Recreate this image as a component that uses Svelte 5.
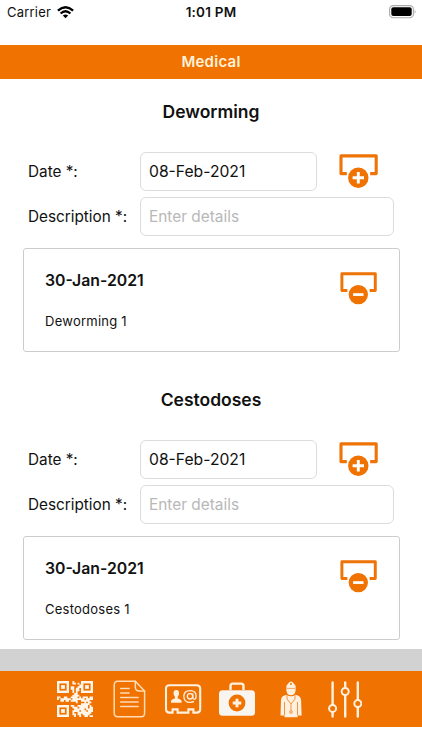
<script lang="ts">
	let sections = $state([
		{ title: 'Deworming', date: '08-Feb-2021', details: '', entry: { date: '30-Jan-2021', text: 'Deworming 1' } },
		{ title: 'Cestodoses', date: '08-Feb-2021', details: '', entry: { date: '30-Jan-2021', text: 'Cestodoses 1' } }
	]);

	// corner squares are drawn separately
	const qrRows = [
		'.........#...........',
		'.........##.#........',
		'.............#.......',
		'........##..##.......',
		'........##.##........',
		'.........#.##........',
		'.........#.#.........',
		'..........##.........',
		'.........####........',
		'##..##..####.#.###.##',
		'#.######.#######.####',
		'..##.##.####..#####..',
		'...........#....#.##.',
		'..............#####..',
		'........##..######.#.',
		'.........###.#####.##',
		'..........######.####',
		'.........####.###.###',
		'.........#..########.',
		'.........##.##.####..',
		'..........#..#..##.##'
	];

	const qrPath = qrRows
		.flatMap((row, y) => [...row].map((cell, x) => (cell === '#' ? `M${x} ${y}h1.05v1.05h-1.05z` : '')))
		.join('');

	const qrCorners = [
		[0, 0],
		[14, 0],
		[0, 14]
	];
</script>

{#snippet action(kind: string)}
	<svg class="action-icon" viewBox="0 0 39 35" aria-hidden="true">
		<path d="M7.8 19.6H2V1.9h35.2v17.7h-6" fill="none" stroke="#ee7408" stroke-width="3.1" stroke-linejoin="round" />
		<circle cx="19.3" cy="23.8" r="10.2" fill="#f07200" />
		<path d={kind === 'add' ? 'M13.6 23.8h11.4M19.3 18.1v11.4' : 'M13.8 23.8h11'} stroke="#fff" stroke-width="2.9" />
	</svg>
{/snippet}

<div class="screen">
	<div class="status">
		<div class="carrier">
			Carrier
			<svg width="17" height="13" viewBox="0 0 17 13" aria-hidden="true">
				<g fill="none" stroke="#000" stroke-width="2.3">
					<path d="M.9 4.6Q8.5-2.2 16.1 4.6" />
					<path d="M3.6 7.5Q8.5 3.1 13.4 7.5" />
				</g>
				<path d="M5.8 9.5Q8.5 7.3 11.2 9.5L8.5 12.3z" />
			</svg>
		</div>
		<div class="time">1:01 PM</div>
		<svg class="battery" width="27" height="14" viewBox="0 0 27 14" aria-hidden="true">
			<rect x=".6" y=".6" width="23.8" height="12.2" rx="3.7" fill="#fff" stroke="#aaa" stroke-width="1.1" />
			<rect x="2.3" y="2.3" width="20.4" height="8.8" rx="2" />
			<path d="M25.6 4.7q2.1 2 0 4z" fill="#aaa" />
		</svg>
	</div>

	<header>Medical</header>

	<main>
		{#each sections as section (section.title)}
			<section>
				<h2>{section.title}</h2>
				<div class="row">
					<label for="{section.title}-date">Date *:</label>
					<input id="{section.title}-date" class="date" bind:value={section.date} />
					<button class="add" aria-label="Add">{@render action('add')}</button>
				</div>
				<div class="row">
					<label for="{section.title}-details">Description *:</label>
					<input id="{section.title}-details" placeholder="Enter details" bind:value={section.details} />
				</div>
				<div class="card">
					<div>
						<h3>{section.entry.date}</h3>
						<p>{section.entry.text}</p>
					</div>
					<button class="remove" aria-label="Remove">{@render action('remove')}</button>
				</div>
			</section>
		{/each}
	</main>

	<div class="strip"></div>

	<nav>
		<button aria-label="QR code">
			<svg width="36" height="36" viewBox="0 0 21 21">
				<path d={qrPath} fill="#fff5ea" />
				{#each qrCorners as [x, y]}
					<rect x={x + 0.7} y={y + 0.7} width="5.6" height="5.6" fill="none" stroke="#fff5ea" stroke-width="1.4" />
					<rect x={x + 2.4} y={y + 2.4} width="2.2" height="2.2" fill="#fff5ea" />
				{/each}
			</svg>
		</button>
		<button aria-label="Notes">
			<svg width="36" height="38" viewBox="0 0 36 38" fill="none" stroke="#ffdcb5" stroke-width="1.5" stroke-linecap="round" stroke-linejoin="round">
				<path d="M24.3 1.3H6.7Q3.2 1.3 3.2 5v28q0 3.7 3.5 3.7h23.6q3.3 0 3.3-3.7V11z" />
				<path d="M24.3 1.3V7q0 4 4 4h5.3M9.7 8.6h8.4M9.7 13h8.4M9.7 17.5h17.4M9.7 22h17.4M9.7 26.5h17.4" />
			</svg>
		</button>
		<button aria-label="Contacts">
			<svg width="38" height="30" viewBox="0 0 38 30" fill="none" stroke="#fff1e0" stroke-width="2.1">
				<path d="M5.6 1.2h27q3.6 0 3.6 3.6v20.4q0 3.4-3.6 3.4h-3.2v-3.2h-5v3.2H13.6v-3.2h-5v3.2h-3q-3.6 0-3.6-3.4V4.8Q2 1.2 5.6 1.2z" />
				<path d="M7 18.7v-1.5q0-1.7 3.9-2.7v-1.7q-1.4-1.3-1.4-3.8 0-3 2.8-3t2.8 3q0 2.5-1.4 3.8v1.7q3.9 1 3.9 2.7v1.5z" fill="#fff1e0" stroke="none" />
				<g stroke-width="1.3">
					<circle cx="26" cy="12.3" r="2.7" />
					<path d="M28.8 9.4v4.2q0 1.7 1.5 1.7 1.8 0 1.8-3.2 0-5.5-6-5.5-6.2 0-6.2 5.8 0 5.9 6.2 5.9 2.4 0 3.9-.9" />
				</g>
			</svg>
		</button>
		<button aria-label="Medical">
			<svg width="36" height="34" viewBox="0 0 36 34">
				<path d="M11.5 8V4q0-2.4 2.4-2.4h8.2q2.4 0 2.4 2.4v4" fill="none" stroke="#fff1e0" stroke-width="2.4" />
				<rect y="8.3" width="36" height="25.5" rx="3.5" fill="#f8f4f0" />
				<circle cx="18" cy="21" r="8.4" fill="#f07200" />
				<path d="M13.7 21h8.6M18 16.7v8.6" stroke="#fff1e0" stroke-width="3" />
			</svg>
		</button>
		<button aria-label="Vet">
			<svg width="22" height="37" viewBox="0 0 22 37">
				<path d="M6.4 5Q6.8 3.5 8 3q.8-2.5 3-2.5T14 3q1.2.5 1.6 2v4.8q-.7 4.5-4.6 4.5T6.4 9.8z" fill="#fff1e0" />
				<path d="M6.5 13.8q4.5 3 9 0 5.2.8 5.6 5.2l.5 15.5h-4v1.7H4.5v-1.7h-4L1 19q.3-4.4 5.5-5.2z" fill="#fff1e0" />
				<path d="M7 14v4l4 5 4-5v-4M11 23v7M4.5 21v13.3M17.5 21v13.3" fill="none" stroke="#f3933f" stroke-width="1" />
				<circle cx="11" cy="31" r="1.3" fill="none" stroke="#f3933f" />
				<path d="M7 7.4h8" stroke="#f3933f" stroke-width=".8" />
				<circle cx="11" cy="3" r="1" fill="#f07200" />
			</svg>
		</button>
		<button aria-label="Settings">
			<svg width="34" height="37" viewBox="0 0 34 37" fill="#f07200" stroke="#fff1e0" stroke-width="2.4" stroke-linecap="round">
				<path d="M4.6 1.5v34M17.2 1.5v34M29.8 1.5v34" />
				<g stroke-width="2">
					<circle cx="4.6" cy="27.4" r="3.5" />
					<circle cx="17.2" cy="10.5" r="3.5" />
					<circle cx="29.8" cy="22.6" r="3.5" />
				</g>
			</svg>
		</button>
	</nav>
</div>

<style>
	:global(body) {
		margin: 0;
		background: #fff;
	}

	.screen {
		width: 422px;
		height: 750px;
		display: flex;
		flex-direction: column;
		overflow: hidden;
		background: #fff;
		color: #111;
		font-family: Inter, 'Liberation Sans', sans-serif;
	}

	.status {
		display: grid;
		grid-template-columns: 1fr auto 1fr;
		align-items: center;
		box-sizing: border-box;
		height: 45px;
		padding: 0 7px 21px 7px;
		font-size: 13px;
	}

	.carrier {
		display: flex;
		align-items: center;
		gap: 6px;
		letter-spacing: 0.2px;
	}

	.time {
		font-size: 13.5px;
		font-weight: 600;
		letter-spacing: 0.2px;
	}

	.battery {
		justify-self: end;
		margin: -1px -1px 0 0;
	}

	header {
		height: 34px;
		line-height: 34px;
		background: #f07200;
		color: #fff1dc;
		text-align: center;
		font-size: 15px;
		font-weight: 600;
		letter-spacing: 0.25px;
	}

	main {
		height: 570px;
		overflow: hidden;
	}

	section {
		box-sizing: border-box;
		height: 288px;
		padding: 19px 23px 0;
	}

	h2 {
		margin: 0 0 26px;
		text-align: center;
		font-size: 17.5px;
		font-weight: 600;
		line-height: 28px;
	}

	.row {
		display: flex;
		align-items: center;
		height: 39px;
		margin-bottom: 6px;
		padding-left: 5px;
	}

	label {
		width: 112px;
		flex-shrink: 0;
		font-size: 15.3px;
		white-space: nowrap;
	}

	input {
		box-sizing: border-box;
		width: 254px;
		height: 39px;
		padding: 0 8px 1px;
		border: 1px solid #dcdcdc;
		border-radius: 6px;
		background: #fff;
		color: #111;
		font: inherit;
		font-size: 15.4px;
		outline: none;
	}

	.date {
		width: 177px;
		font-size: 15.7px;
	}

	input::placeholder {
		color: #b8b8b8;
		opacity: 1;
	}

	button {
		display: flex;
		padding: 0;
		border: none;
		background: none;
	}

	.action-icon {
		display: block;
		width: 100%;
	}

	.add {
		width: 39px;
		margin-left: 22px;
	}

	.card {
		display: flex;
		justify-content: space-between;
		align-items: flex-start;
		box-sizing: border-box;
		width: 377px;
		height: 104px;
		margin-top: 12px;
		padding: 21px 22px 0 21px;
		border: 1px solid #ccc;
		border-radius: 3px;
	}

	h3 {
		margin: 0;
		font-size: 15.8px;
		font-weight: 600;
		line-height: 22px;
	}

	p {
		margin: 19px 0 0;
		font-size: 13px;
		letter-spacing: 0.25px;
		line-height: 20px;
	}

	.remove {
		width: 37px;
		margin-top: 2px;
	}

	.strip {
		flex-shrink: 0;
		height: 22px;
		background: #d2d2d2;
	}

	nav {
		display: flex;
		align-items: center;
		box-sizing: border-box;
		height: 56px;
		padding: 0 48px;
		background: #f07200;
	}

	nav button {
		width: 54px;
		justify-content: center;
	}
</style>
